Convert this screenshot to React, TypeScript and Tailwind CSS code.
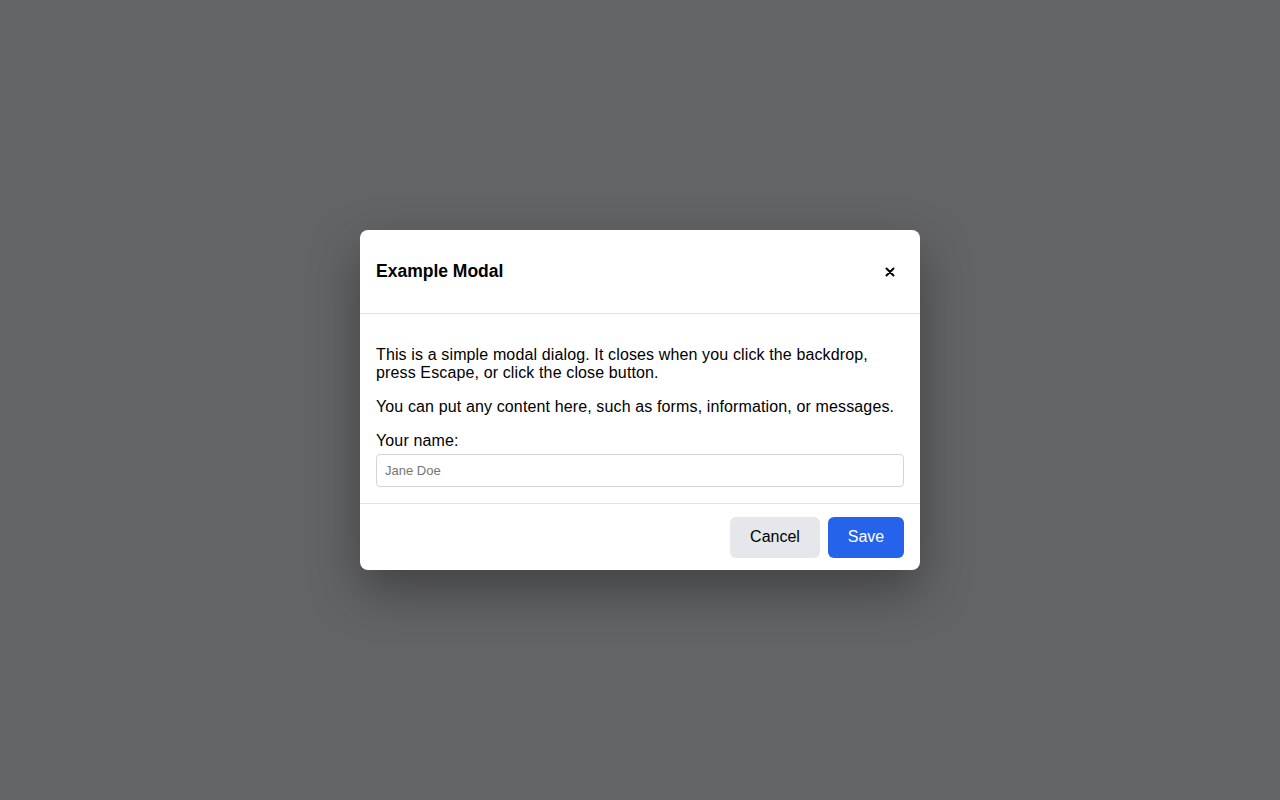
import { useState } from "react";

export default function App() {
  const [name, setName] = useState("");

  return (
    <div
      className="w-full h-screen bg-[#636466] flex items-center justify-center"
      style={{ fontFamily: '"Liberation Sans", Arial, sans-serif' }}
    >
      {/* Dialog */}
      <div className="w-[560px] bg-white rounded-lg shadow-[0_20px_50px_rgba(0,0,0,0.35)] text-black">
        <div className="h-[84px] px-4 flex items-center justify-between border-b border-[#e2e2e2]">
          <h2 className="text-[17.5px] font-bold">Example Modal</h2>
          <button className="w-7 h-7 flex items-center justify-center" aria-label="Close">
            <svg width="10" height="10" viewBox="0 0 10 10">
              <path d="M1.5 1.5L8.5 8.5M8.5 1.5L1.5 8.5" stroke="#000" strokeWidth="2" strokeLinecap="round" />
            </svg>
          </button>
        </div>

        <div className="p-4 text-base leading-[18px] tracking-[0.13px]">
          <p className="my-4">
            This is a simple modal dialog. It closes when you click the backdrop, press Escape, or click the close button.
          </p>
          <p className="my-4">You can put any content here, such as forms, information, or messages.</p>
          <label className="block">Your name:</label>
          <input
            value={name}
            onChange={(e) => setName(e.target.value)}
            placeholder="Jane Doe"
            className="mt-1 w-full h-[33px] px-2 border border-[#d4d4d4] rounded text-[13px] tracking-normal placeholder:text-[#757575] outline-none"
          />
        </div>

        <div className="h-[67px] px-4 flex items-center justify-end gap-2 border-t border-[#e2e2e2]">
          <button className="h-[41px] w-[90px] rounded-md bg-[#e5e7eb] text-base">Cancel</button>
          <button className="h-[41px] w-[76px] rounded-md bg-[#2563eb] text-white text-base">Save</button>
        </div>
      </div>
    </div>
  );
}
